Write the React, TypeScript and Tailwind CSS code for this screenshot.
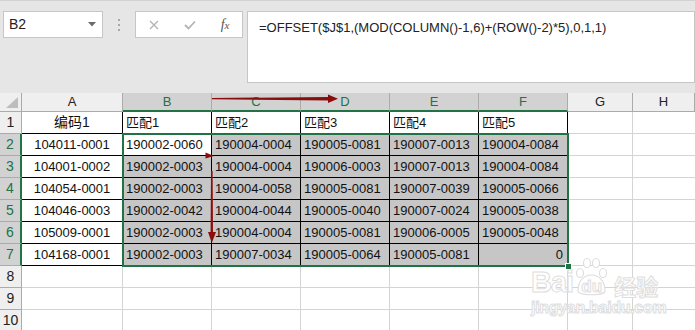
const cols = ["A", "B", "C", "D", "E", "F", "G", "H"];

/* rows 2..7 of the sheet, columns A..F */
const data = [
  ["104011-0001", "190002-0060", "190004-0004", "190005-0081", "190007-0013", "190004-0084"],
  ["104001-0002", "190002-0003", "190004-0004", "190006-0003", "190007-0013", "190004-0084"],
  ["104054-0001", "190002-0003", "190004-0058", "190005-0081", "190007-0039", "190005-0066"],
  ["104046-0003", "190002-0042", "190004-0044", "190005-0040", "190007-0024", "190005-0038"],
  ["105009-0001", "190002-0003", "190004-0004", "190005-0081", "190006-0005", "190005-0048"],
  ["104168-0001", "190002-0003", "190007-0034", "190005-0064", "190005-0081", "0"],
];

const headRow = ["编码1", "匹配1", "匹配2", "匹配3", "匹配4", "匹配5"];

function FormulaBar() {
  return (
    <div className="h-[93px] bg-[#e6e6e6] border-t border-[#d2d2d2] flex items-start pt-[10px]">
      {/* name box */}
      <div className="ml-[3px] w-[100px] h-[27px] bg-white border border-[#c6c6c6] flex items-center justify-between pl-[5px] pr-[6px]">
        <span className="text-[14px] text-[#222]">B2</span>
        <svg width="8" height="5" viewBox="0 0 8 5">
          <polygon points="0,0 8,0 4,4.5" fill="#6a6a6a" />
        </svg>
      </div>
      {/* grip dots */}
      <div className="w-[32px] h-[27px] flex flex-col items-center justify-center gap-[3px]">
        <span className="w-[2px] h-[2px] bg-[#a8a8a8]" />
        <span className="w-[2px] h-[2px] bg-[#a8a8a8]" />
        <span className="w-[2px] h-[2px] bg-[#a8a8a8]" />
      </div>
      {/* cancel / enter / fx */}
      <div className="w-[108px] h-[27px] bg-white border border-[#c6c6c6] flex items-center justify-around">
        <svg width="10" height="10" viewBox="0 0 10 10">
          <path d="M1 1 L9 9 M9 1 L1 9" stroke="#b4b4b4" strokeWidth="1.4" />
        </svg>
        <svg width="12" height="10" viewBox="0 0 12 10">
          <path d="M1 5 L4.5 8.5 L11 1.5" stroke="#b4b4b4" strokeWidth="1.8" fill="none" />
        </svg>
        <span className="font-['Liberation_Serif'] italic text-[14px] text-[#555] leading-none">
          f<span className="text-[11px]">x</span>
        </span>
      </div>
      {/* formula input */}
      <div className="ml-[4px] flex-1 h-[72px] bg-white border border-[#c6c6c6] pl-[11px] pt-[6px] text-[13px] text-[#222]">
        =OFFSET($J$1,(MOD(COLUMN()-1,6)+(ROW()-2)*5),0,1,1)
      </div>
    </div>
  );
}

function Sheet() {
  return (
    <div className="relative grid grid-cols-[22px_101px_89px_89px_89px_89px_89px_65px_1fr] grid-rows-[19px_repeat(10,22px)] text-[13px] text-[#111]">
      {/* corner */}
      <div className="bg-[#efefef] border-r border-b border-[#ababab] flex items-end justify-end pr-[3px] pb-[3px]">
        <svg width="12" height="11" viewBox="0 0 12 11">
          <polygon points="12,0 12,11 0,11" fill="#bdbdbd" />
        </svg>
      </div>
      {/* column headers */}
      {cols.map((c, i) => {
        const sel = i >= 1 && i <= 5;
        return (
          <div
            key={c}
            className={
              sel
                ? "bg-[#d2d2d2] border-r border-[#ababab] border-b-2 border-b-[#217346] text-[#217346] flex items-center justify-center text-[13px]"
                : "bg-[#efefef] border-r border-b border-[#ababab] text-[#222] flex items-center justify-center text-[13px]"
            }
          >
            {c}
          </div>
        );
      })}

      {/* row 1 */}
      <div className="bg-[#efefef] border-r border-b border-[#ababab] flex items-center justify-center text-[14px] text-[#222]">1</div>
      {headRow.map((t, i) => (
        <div
          key={t}
          className={
            i === 0
              ? "border-r border-b border-black flex items-center justify-center font-['Liberation_Sans','Noto_Sans_CJK_SC',sans-serif] text-[14px]"
              : "border-r border-b border-black flex items-center pl-[3px] font-['Liberation_Sans','Noto_Sans_CJK_SC',sans-serif]"
          }
        >
          {t}
        </div>
      ))}
      <div className="border-r border-b border-[#d4d4d4]" />
      <div className="border-b border-[#d4d4d4]" />

      {/* rows 2..7 */}
      {data.map((row, r) => (
        <div key={r} className="contents">
          <div className="bg-[#d2d2d2] border-r-2 border-r-[#217346] border-b border-b-[#ababab] flex items-center justify-center text-[14px] text-[#217346]">
            {r + 2}
          </div>
          {row.map((v, c) => (
            <div
              key={c}
              className={
                c === 0
                  ? "bg-white border-r border-b border-black flex items-center justify-center"
                  : r === 0 && c === 1
                    ? "bg-white border-r border-b border-black flex items-center pl-[3px]"
                    : v === "0"
                      ? "bg-[#c6c6c6] border-r border-b border-black flex items-center justify-end pr-[4px]"
                      : "bg-[#c6c6c6] border-r border-b border-black flex items-center pl-[3px]"
              }
            >
              {v}
            </div>
          ))}
          <div className="border-r border-b border-[#d4d4d4]" />
          <div className="border-b border-[#d4d4d4]" />
        </div>
      ))}

      {/* rows 8..10 */}
      {[8, 9, 10].map((n) => (
        <div key={n} className="contents">
          <div className="bg-[#efefef] border-r border-b border-[#ababab] flex items-center justify-center text-[14px] text-[#222]">
            {n}
          </div>
          {cols.map((c, i) => (
            <div key={c} className={i === 7 ? "border-b border-[#d4d4d4]" : "border-r border-b border-[#d4d4d4]"} />
          ))}
        </div>
      ))}

      {/* selection outline B2:F7, absolutely placed in its grid area */}
      <div className="absolute col-[3/8] row-[3/9] -inset-px border-2 border-[#217346] pointer-events-none">
        <span className="absolute -right-[5px] -bottom-[5px] w-[7px] h-[7px] bg-[#217346] border border-white" />
      </div>
    </div>
  );
}

function Arrows() {
  return (
    <svg className="absolute left-0 top-0 pointer-events-none" width="695" height="330" viewBox="0 0 695 330">
      {/* across the column headers */}
      <polygon points="212,98 329,97 329,100.5 212,99.2" fill="#8a0d0d" />
      <polygon points="328,94.5 338,98.7 328,103" fill="#8a0d0d" />
      {/* small head at B2 */}
      <polygon points="205.5,152.5 214,156 205.5,158.5" fill="#8a0d0d" />
      {/* down column B */}
      <polygon points="211,171 212.6,171 213,233 210.6,233" fill="#8a0d0d" />
      <polygon points="208,232 216,232 211.8,243" fill="#8a0d0d" />
    </svg>
  );
}

function Watermark() {
  return (
    <div className="absolute left-[531px] top-[268px] pointer-events-none flex flex-col items-start text-white [-webkit-text-stroke:1px_#dedede]">
      <div className="flex items-end font-['Liberation_Sans'] font-bold leading-none">
        <span className="text-[29px] tracking-[-1px]">Bai</span>
        <span className="relative w-[37px] h-[26px] flex items-end justify-center">
          <svg className="absolute left-0 top-[-16px]" width="37" height="42" viewBox="0 0 37 42">
            <g fill="white" stroke="#dedede" strokeWidth="1.2">
              <ellipse cx="7" cy="18" rx="3.5" ry="4.5" />
              <ellipse cx="14" cy="8" rx="3.5" ry="4.5" />
              <ellipse cx="23" cy="8" rx="3.5" ry="4.5" />
              <ellipse cx="30" cy="18" rx="3.5" ry="4.5" />
              <path d="M5 36 C5 25 12 20 18.5 20 C25 20 32 25 32 36 C32 41 5 41 5 36 Z" />
            </g>
          </svg>
          <span className="relative text-[17px] pb-[2px]">du</span>
        </span>
        <span className="ml-[4px] text-[22px] pb-[1px] font-['Noto_Sans_CJK_SC',sans-serif]">经验</span>
      </div>
      <div className="mt-[3px] text-[16px] font-['Liberation_Sans'] font-bold leading-none tracking-[-0.3px]">jingyan.baidu.com</div>
    </div>
  );
}

export default function App() {
  return (
    <div className="relative w-[695px] h-[330px] overflow-hidden bg-white font-['Liberation_Sans','Noto_Sans_CJK_SC',sans-serif]">
      <FormulaBar />
      <Sheet />
      <Arrows />
      <Watermark />
    </div>
  );
}
